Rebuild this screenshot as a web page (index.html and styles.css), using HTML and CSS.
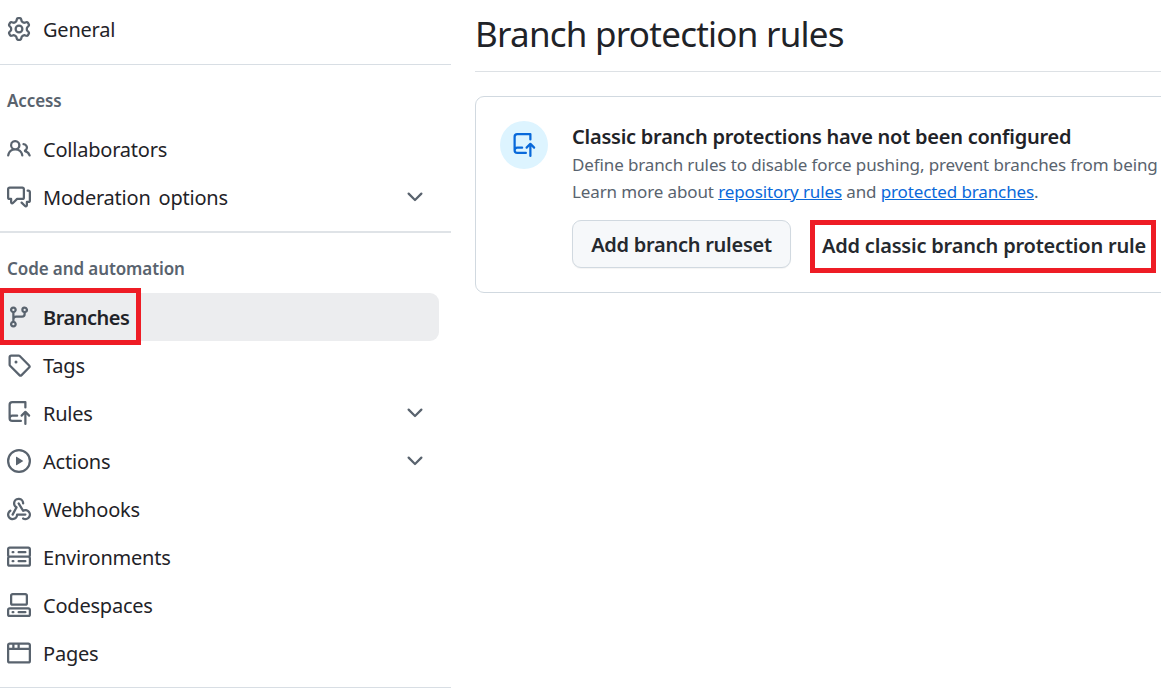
FILE: index.html
```html
<!DOCTYPE html>
<html lang="en">
<head>
<meta charset="utf-8">
<title>Branch protection rules</title>
<link rel="stylesheet" href="styles.css">
</head>
<body>
<div class="page">
  <nav class="sidebar">
    <ul class="group group-first">
      <li class="item"><svg class="icon" viewBox="0 0 16 16"><path d="M8 0a8.2 8.2 0 0 1 .701.031C9.444.095 9.99.645 10.16 1.29l.288 1.107c.018.066.079.158.212.224.231.114.454.243.668.386.123.082.233.09.299.071l1.103-.303c.644-.176 1.392.021 1.82.63.27.385.506.792.704 1.218.315.675.111 1.422-.364 1.891l-.814.806c-.049.048-.098.147-.088.294.016.257.016.515 0 .772-.01.147.038.246.088.294l.814.806c.475.469.679 1.216.364 1.891a7.977 7.977 0 0 1-.704 1.217c-.428.61-1.176.807-1.82.63l-1.102-.302c-.067-.019-.177-.011-.3.071a5.909 5.909 0 0 1-.668.386c-.133.066-.194.158-.211.224l-.29 1.106c-.168.646-.715 1.196-1.458 1.26a8.006 8.006 0 0 1-1.402 0c-.743-.064-1.289-.614-1.458-1.26l-.289-1.106c-.018-.066-.079-.158-.212-.224a5.738 5.738 0 0 1-.668-.386c-.123-.082-.233-.09-.299-.071l-1.103.303c-.644.176-1.392-.021-1.82-.63a8.12 8.12 0 0 1-.704-1.218c-.315-.675-.111-1.422.363-1.891l.815-.806c.05-.048.098-.147.088-.294a6.214 6.214 0 0 1 0-.772c.01-.147-.038-.246-.088-.294l-.815-.806C.635 6.045.431 5.298.746 4.623a7.92 7.92 0 0 1 .704-1.217c.428-.61 1.176-.807 1.82-.63l1.102.302c.067.019.177.011.3-.071.214-.143.437-.272.668-.386.133-.066.194-.158.211-.224l.29-1.106C6.009.645 6.556.095 7.299.03 7.53.01 7.764 0 8 0Zm-.571 1.525c-.036.003-.108.036-.137.146l-.289 1.105c-.147.561-.549.967-.998 1.189-.173.086-.34.183-.5.29-.417.278-.97.423-1.529.27l-1.103-.303c-.109-.03-.175.016-.195.045-.22.312-.412.644-.573.99-.014.031-.021.11.059.19l.815.806c.411.406.562.957.53 1.456a4.709 4.709 0 0 0 0 .582c.032.499-.119 1.05-.53 1.456l-.815.806c-.081.08-.073.159-.059.19.162.346.353.677.573.989.02.03.085.076.195.046l1.102-.303c.56-.153 1.113-.008 1.53.27.161.107.328.204.501.29.447.222.85.629.997 1.189l.289 1.105c.029.109.101.143.137.146a6.6 6.6 0 0 0 1.142 0c.036-.003.108-.036.137-.146l.289-1.105c.147-.561.549-.967.998-1.189.173-.086.34-.183.5-.29.417-.278.97-.423 1.529-.27l1.103.303c.109.029.175-.016.195-.045.22-.313.411-.644.573-.99.014-.031.021-.11-.059-.19l-.815-.806c-.411-.406-.562-.957-.53-1.456a4.709 4.709 0 0 0 0-.582c-.032-.499.119-1.05.53-1.456l.815-.806c.081-.08.073-.159.059-.19a6.464 6.464 0 0 0-.573-.989c-.02-.03-.085-.076-.195-.046l-1.102.303c-.56.153-1.113.008-1.53-.27a4.44 4.44 0 0 0-.501-.29c-.447-.222-.85-.629-.997-1.189l-.289-1.105c-.029-.11-.101-.143-.137-.146a6.6 6.6 0 0 0-1.142 0ZM11 8a3 3 0 1 1-6 0 3 3 0 0 1 6 0ZM9.5 8a1.5 1.5 0 1 0-3.001.001A1.5 1.5 0 0 0 9.5 8Z"/></svg><span class="label">General</span></li>
    </ul>
    <h2 class="heading">Access</h2>
    <ul class="group group-access">
      <li class="item"><svg class="icon" viewBox="0 0 16 16"><path d="M2 5.5a3.5 3.5 0 1 1 5.898 2.549 5.508 5.508 0 0 1 3.034 4.084.75.75 0 1 1-1.482.235 4 4 0 0 0-7.9 0 .75.75 0 0 1-1.482-.236A5.507 5.507 0 0 1 3.102 8.05 3.493 3.493 0 0 1 2 5.5ZM11 4a3.001 3.001 0 0 1 2.22 5.018 5.01 5.01 0 0 1 2.56 3.012.749.749 0 0 1-.885.954.752.752 0 0 1-.549-.514 3.507 3.507 0 0 0-2.522-2.372.75.75 0 0 1-.574-.73v-.352a.75.75 0 0 1 .416-.672A1.5 1.5 0 0 0 11 5.5.75.75 0 0 1 11 4Zm-5.5-.5a2 2 0 1 0-.001 3.999A2 2 0 0 0 5.5 3.5Z"/></svg><span class="label">Collaborators</span></li>
      <li class="item"><svg class="icon" viewBox="0 0 16 16"><path d="M1.75 1h8.5c.966 0 1.75.784 1.75 1.75v5.5A1.75 1.75 0 0 1 10.25 10H7.061l-2.574 2.573A1.458 1.458 0 0 1 2 11.543V10h-.25A1.75 1.75 0 0 1 0 8.25v-5.5C0 1.784.784 1 1.75 1ZM1.5 2.75v5.5c0 .138.112.25.25.25h1a.75.75 0 0 1 .75.75v2.19l2.72-2.72a.749.749 0 0 1 .53-.22h3.5a.25.25 0 0 0 .25-.25v-5.5a.25.25 0 0 0-.25-.25h-8.5a.25.25 0 0 0-.25.25Zm13 2a.25.25 0 0 0-.25-.25h-.5a.75.75 0 0 1 0-1.5h.5c.966 0 1.75.784 1.75 1.75v5.5A1.75 1.75 0 0 1 14.25 12H14v1.543a1.458 1.458 0 0 1-2.487 1.03L9.22 12.28a.749.749 0 0 1 .326-1.275.749.749 0 0 1 .734.215l2.22 2.22v-2.19a.75.75 0 0 1 .75-.75h1a.25.25 0 0 0 .25-.25Z"/></svg><span class="label">Moderation options</span><svg class="icon chevron" viewBox="0 0 16 16"><path d="M12.78 5.22a.749.749 0 0 1 0 1.06l-4.25 4.25a.749.749 0 0 1-1.06 0L3.22 6.28a.749.749 0 1 1 1.06-1.06L8 8.939l3.72-3.719a.749.749 0 0 1 1.06 0Z"/></svg></li>
    </ul>
    <h2 class="heading">Code and automation</h2>
    <ul class="group group-code">
      <li class="item selected"><svg class="icon" viewBox="0 0 16 16"><path d="M9.5 3.25a2.25 2.25 0 1 1 3 2.122V6A2.5 2.5 0 0 1 10 8.5H6a1 1 0 0 0-1 1v1.128a2.251 2.251 0 1 1-1.5 0V5.372a2.25 2.25 0 1 1 1.5 0v1.836A2.493 2.493 0 0 1 6 7h4a1 1 0 0 0 1-1v-.628A2.25 2.25 0 0 1 9.5 3.25Zm-6 0a.75.75 0 1 0 1.5 0 .75.75 0 0 0-1.5 0Zm8.25-.75a.75.75 0 1 0 0 1.5.75.75 0 0 0 0-1.5ZM4.25 12a.75.75 0 1 0 0 1.5.75.75 0 0 0 0-1.5Z"/></svg><span class="label">Branches</span><span class="marker"></span></li>
      <li class="item"><svg class="icon" viewBox="0 0 16 16"><path d="M1 7.775V2.75C1 1.784 1.784 1 2.75 1h5.025c.464 0 .91.184 1.238.513l6.25 6.25a1.75 1.75 0 0 1 0 2.474l-5.026 5.026a1.75 1.75 0 0 1-2.474 0l-6.25-6.25A1.752 1.752 0 0 1 1 7.775Zm1.5 0c0 .066.026.13.073.177l6.25 6.25a.25.25 0 0 0 .354 0l5.025-5.025a.25.25 0 0 0 0-.354l-6.25-6.25a.25.25 0 0 0-.177-.073H2.75a.25.25 0 0 0-.25.25ZM6 5a1 1 0 1 1 0 2 1 1 0 0 1 0-2Z"/></svg><span class="label">Tags</span></li>
      <li class="item"><svg class="icon" viewBox="0 0 16 16"><path d="M1 2.5A2.5 2.5 0 0 1 3.5 0h8.75a.75.75 0 0 1 .75.75v3.5a.75.75 0 0 1-1.5 0V1.5h-8a1 1 0 0 0-1 1v6.708A2.493 2.493 0 0 1 3.5 9h3.25a.75.75 0 0 1 0 1.5H3.5a1 1 0 0 0 0 2h5.75a.75.75 0 0 1 0 1.5H3.5A2.5 2.5 0 0 1 1 11.5Zm13.23 7.79h-.001l-1.224-1.224v6.184a.75.75 0 0 1-1.5 0V9.066L10.28 10.29a.75.75 0 0 1-1.06-1.061l2.505-2.504a.75.75 0 0 1 1.06 0L15.29 9.23a.751.751 0 0 1-.018 1.042.751.751 0 0 1-1.042.018Z"/></svg><span class="label">Rules</span><svg class="icon chevron" viewBox="0 0 16 16"><path d="M12.78 5.22a.749.749 0 0 1 0 1.06l-4.25 4.25a.749.749 0 0 1-1.06 0L3.22 6.28a.749.749 0 1 1 1.06-1.06L8 8.939l3.72-3.719a.749.749 0 0 1 1.06 0Z"/></svg></li>
      <li class="item"><svg class="icon" viewBox="0 0 16 16"><path d="M8 0a8 8 0 1 1 0 16A8 8 0 0 1 8 0ZM1.5 8a6.5 6.5 0 1 0 13 0 6.5 6.5 0 0 0-13 0Zm4.879-2.773 4.264 2.559a.25.25 0 0 1 0 .428l-4.264 2.559A.25.25 0 0 1 6 10.559V5.442a.25.25 0 0 1 .379-.215Z"/></svg><span class="label">Actions</span><svg class="icon chevron" viewBox="0 0 16 16"><path d="M12.78 5.22a.749.749 0 0 1 0 1.06l-4.25 4.25a.749.749 0 0 1-1.06 0L3.22 6.28a.749.749 0 1 1 1.06-1.06L8 8.939l3.72-3.719a.749.749 0 0 1 1.06 0Z"/></svg></li>
      <li class="item"><svg class="icon" viewBox="0 0 16 16"><path d="M5.5 4.25a2.25 2.25 0 0 1 4.5 0 .75.75 0 0 0 1.5 0 3.75 3.75 0 1 0-6.14 2.889l-2.272 4.258a.75.75 0 0 0 1.324.706L7 7.25a.75.75 0 0 0-.309-1.015A2.25 2.25 0 0 1 5.5 4.25Z"/><path d="M7.364 3.607a.75.75 0 0 1 1.03.257l2.608 4.349a3.75 3.75 0 1 1-.628 6.785.75.75 0 0 1 .752-1.299 2.25 2.25 0 1 0-.033-3.88.75.75 0 0 1-1.03-.256L7.107 4.636a.75.75 0 0 1 .257-1.03Z"/><path d="M2.9 8.776A.75.75 0 0 1 2.625 9.8 2.25 2.25 0 1 0 6 11.75a.75.75 0 0 1 .75-.751h5.5a.75.75 0 0 1 0 1.5H7.425a3.751 3.751 0 1 1-5.55-3.998.75.75 0 0 1 1.024.274Z"/></svg><span class="label">Webhooks</span></li>
      <li class="item"><svg class="icon" viewBox="0 0 16 16"><path d="M1.75 1h12.5c.966 0 1.75.784 1.75 1.75v4c0 .372-.116.717-.314 1 .198.283.314.628.314 1v4a1.75 1.75 0 0 1-1.75 1.75H1.75A1.75 1.75 0 0 1 0 12.75v-4c0-.358.109-.707.314-1a1.739 1.739 0 0 1-.314-1v-4C0 1.784.784 1 1.75 1ZM1.5 2.75v4c0 .138.112.25.25.25h12.5a.25.25 0 0 0 .25-.25v-4a.25.25 0 0 0-.25-.25H1.75a.25.25 0 0 0-.25.25Zm.25 5.75a.25.25 0 0 0-.25.25v4c0 .138.112.25.25.25h12.5a.25.25 0 0 0 .25-.25v-4a.25.25 0 0 0-.25-.25ZM7 4.75A.75.75 0 0 1 7.75 4h4.5a.75.75 0 0 1 0 1.5h-4.5A.75.75 0 0 1 7 4.75ZM7.75 10h4.5a.75.75 0 0 1 0 1.5h-4.5a.75.75 0 0 1 0-1.5ZM3 4.75A.75.75 0 0 1 3.75 4h.5a.75.75 0 0 1 0 1.5h-.5A.75.75 0 0 1 3 4.75ZM3.75 10h.5a.75.75 0 0 1 0 1.5h-.5a.75.75 0 0 1 0-1.5Z"/></svg><span class="label">Environments</span></li>
      <li class="item"><svg class="icon" viewBox="0 0 16 16"><path d="M0 11.25c0-.966.784-1.75 1.75-1.75h12.5c.966 0 1.75.784 1.75 1.75v3A1.75 1.75 0 0 1 14.25 16H1.75A1.75 1.75 0 0 1 0 14.25Zm2-9.5C2 .784 2.784 0 3.75 0h8.5C13.216 0 14 .784 14 1.75v5a1.75 1.75 0 0 1-1.75 1.75h-8.5A1.75 1.75 0 0 1 2 6.75Zm1.75-.25a.25.25 0 0 0-.25.25v5c0 .138.112.25.25.25h8.5a.25.25 0 0 0 .25-.25v-5a.25.25 0 0 0-.25-.25Zm-2 9.5a.25.25 0 0 0-.25.25v3c0 .138.112.25.25.25h12.5a.25.25 0 0 0 .25-.25v-3a.25.25 0 0 0-.25-.25Z"/><path d="M7 12.75a.75.75 0 0 1 .75-.75h4.5a.75.75 0 0 1 0 1.5h-4.5a.75.75 0 0 1-.75-.75Zm-4 0a.75.75 0 0 1 .75-.75h.5a.75.75 0 0 1 0 1.5h-.5a.75.75 0 0 1-.75-.75Z"/></svg><span class="label">Codespaces</span></li>
      <li class="item"><svg class="icon" viewBox="0 0 16 16"><path d="M0 2.75C0 1.784.784 1 1.75 1h12.5c.966 0 1.75.784 1.75 1.75v10.5A1.75 1.75 0 0 1 14.25 15H1.75A1.75 1.75 0 0 1 0 13.25ZM14.5 6h-13v7.25c0 .138.112.25.25.25h12.5a.25.25 0 0 0 .25-.25Zm-6-3.5v2h6V2.75a.25.25 0 0 0-.25-.25ZM5 2.5v2h2v-2Zm-3.25 0a.25.25 0 0 0-.25.25V4.5h2v-2Z"/></svg><span class="label">Pages</span></li>
    </ul>
  </nav>
  <main class="content">
    <h1 class="title">Branch protection rules</h1>
    <section class="card">
      <span class="badge"><svg class="icon badge-icon" viewBox="0 0 16 16"><path d="M1 2.5A2.5 2.5 0 0 1 3.5 0h8.75a.75.75 0 0 1 .75.75v3.5a.75.75 0 0 1-1.5 0V1.5h-8a1 1 0 0 0-1 1v6.708A2.493 2.493 0 0 1 3.5 9h3.25a.75.75 0 0 1 0 1.5H3.5a1 1 0 0 0 0 2h5.75a.75.75 0 0 1 0 1.5H3.5A2.5 2.5 0 0 1 1 11.5Zm13.23 7.79h-.001l-1.224-1.224v6.184a.75.75 0 0 1-1.5 0V9.066L10.28 10.29a.75.75 0 0 1-1.06-1.061l2.505-2.504a.75.75 0 0 1 1.06 0L15.29 9.23a.751.751 0 0 1-.018 1.042.751.751 0 0 1-1.042.018Z"/></svg></span>
      <div class="card-body">
        <h3 class="card-title">Classic branch protections have not been configured</h3>
        <p class="text text-first">Define branch rules to disable force pushing, prevent branches from being</p>
        <p class="text">Learn more about <a class="link" href="#">repository rules</a> and <a class="link" href="#">protected branches</a>.</p>
        <div class="actions">
          <button class="button">Add branch ruleset</button>
          <button class="button button-marked">Add classic branch protection rule</button>
        </div>
      </div>
    </section>
  </main>
</div>
</body>
</html>
```
FILE: styles.css
```css
* { box-sizing: border-box; }
body {
  margin: 0;
  overflow: hidden;
  background: #fff;
  color: #1f2328;
  font-family: "Noto Sans", "Open Sans", sans-serif;
}
h1, h2, h3, p, ul { margin: 0; padding: 0; font-weight: 400; }
.page { display: flex; width: 1161px; height: 688px; overflow: hidden; }

.sidebar { flex: none; width: 451px; padding-top: 5px; }
.group { list-style: none; border-bottom: 1px solid #d8dee4; padding-bottom: 10px; }
.group-first { padding-bottom: 11px; }
.group-access { border-bottom-width: 2px; border-color: #dfe3e7; }
.item {
  position: relative;
  display: flex;
  align-items: center;
  width: 439px;
  height: 48px;
  padding: 0 12px 0 7px;
  font-size: 20px;
  letter-spacing: -0.22px;
  word-spacing: 3px;
}
.icon { flex: none; width: 24px; height: 24px; fill: #59636e; }
.label { margin-left: 12px; padding-top: 2px; line-height: 28px; }
.chevron { margin-left: auto; }
.selected {
  background: #ecedef;
  border-radius: 0 9px 9px 0;
  font-weight: 600;
  letter-spacing: -0.5px;
}
.marker {
  position: absolute;
  left: 0;
  top: -5px;
  width: 141px;
  height: 57px;
  border: 5px solid #ee1c25;
  border-left-width: 4px;
}
.heading {
  height: 60px;
  padding: 23px 0 0 7px;
  color: #59636e;
  font-size: 17px;
  font-weight: 600;
  letter-spacing: -0.1px;
  line-height: 26px;
}

.content { flex: 1; min-width: 0; padding-left: 24px; }
.title {
  height: 72px;
  padding-top: 10px;
  border-bottom: 1px solid #dde1e5;
  font-size: 35px;
  letter-spacing: -0.75px;
  line-height: 48px;
  white-space: nowrap;
}
.card {
  display: flex;
  gap: 24px;
  width: 760px;
  height: 197px;
  margin-top: 24px;
  padding: 24px;
  border: 1px solid #d1d9e0;
  border-radius: 9px;
}
.badge {
  display: flex;
  flex: none;
  align-items: center;
  justify-content: center;
  width: 48px;
  height: 48px;
  border-radius: 50%;
  background: #ddf4ff;
}
.badge-icon { fill: #0969da; }
.card-body { flex: none; white-space: nowrap; }
.card-title {
  padding-top: 2px;
  font-size: 20px;
  font-weight: 600;
  letter-spacing: -0.24px;
  line-height: 28px;
}
.text { color: #59636e; font-size: 17px; letter-spacing: -0.12px; line-height: 27px; }
.link { color: #0969da; text-decoration: underline; }
.actions { display: flex; align-items: flex-start; gap: 19px; margin-top: 15px; }
.button {
  width: 219px;
  height: 48px;
  padding: 2px 0 0;
  border: 1px solid #d1d9e0;
  border-radius: 9px;
  background: #f6f8fa;
  box-shadow: 0 1px 1px rgba(31, 35, 40, 0.05);
  color: #25292e;
  font: 600 20px/44px "Noto Sans", "Open Sans", sans-serif;
  letter-spacing: -0.26px;
  white-space: nowrap;
}
.button-marked {
  width: 346px;
  height: 53px;
  padding: 0 0 2px 2px;
  border: 5px solid #ee1c25;
  border-radius: 0;
  background: #fff;
  box-shadow: none;
  letter-spacing: -0.2px;
  line-height: 41px;
}
```
